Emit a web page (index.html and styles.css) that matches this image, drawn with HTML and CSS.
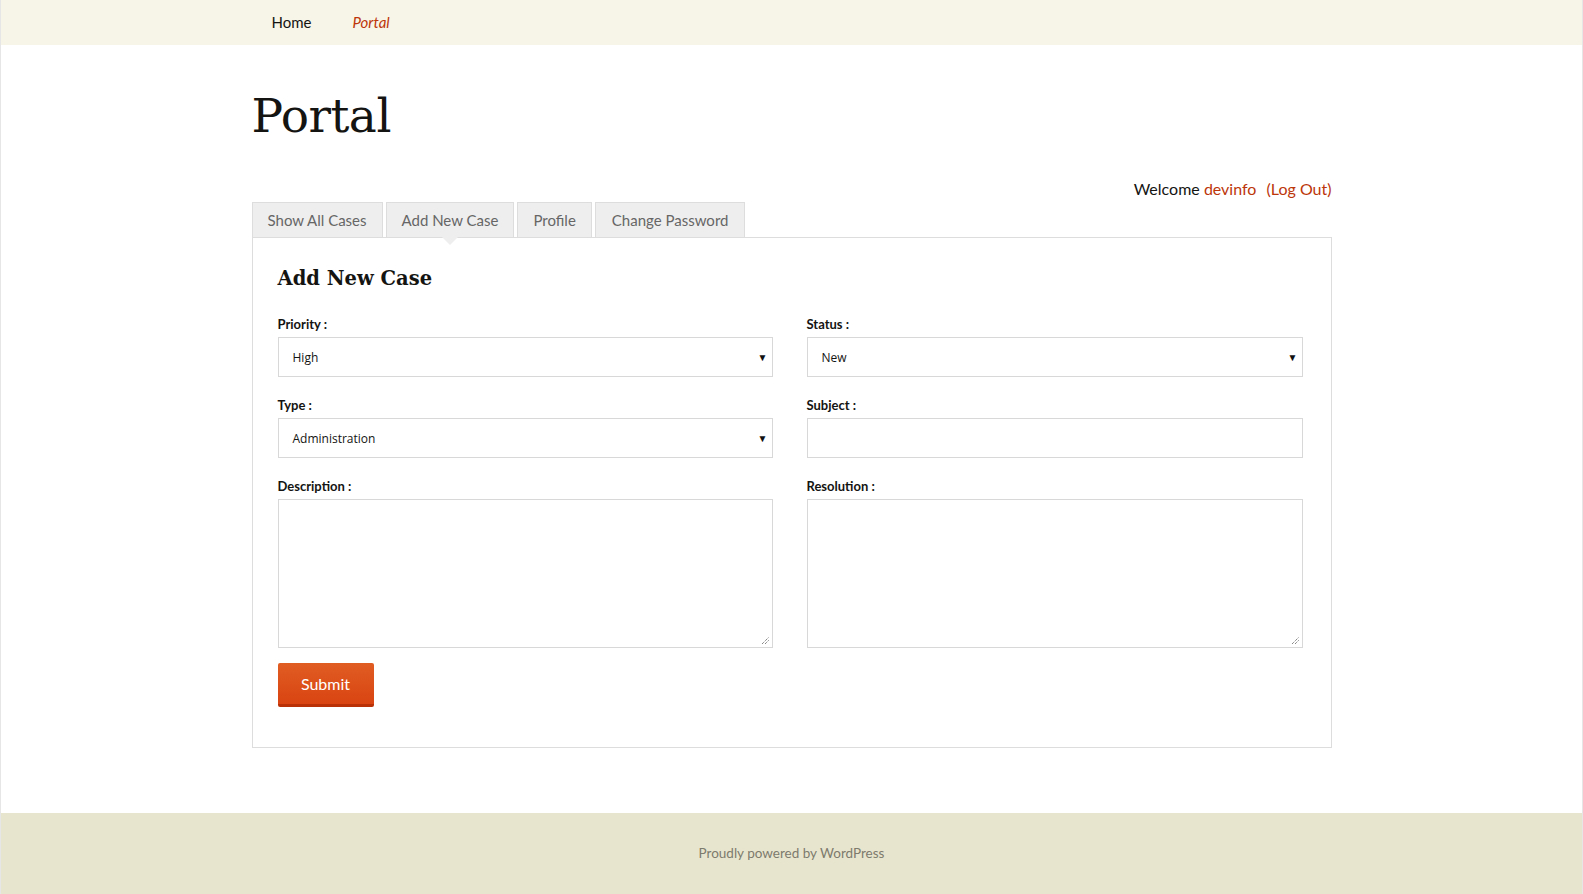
FILE: index.html
```html
<!DOCTYPE html>
<html>
<head>
<meta charset="utf-8">
<link rel="stylesheet" href="styles.css">
<title>Portal</title>
</head>
<body>
<div class="page">
  <header class="navbar">
    <nav class="nav">
      <a class="nav-link" href="#">Home</a>
      <a class="nav-link current" href="#">Portal</a>
    </nav>
  </header>
  <main class="main">
    <h1 class="page-title">Portal</h1>
    <div class="welcome">Welcome <a href="#" class="user">devinfo</a> <a href="#" class="logout">(Log Out)</a></div>
    <ul class="tabs">
      <li class="tab">Show All Cases</li>
      <li class="tab active">Add New Case</li>
      <li class="tab">Profile</li>
      <li class="tab wide">Change Password</li>
    </ul>
    <section class="panel">
      <h2 class="panel-title">Add New Case</h2>
      <form class="form-grid">
        <div class="field">
          <label class="label">Priority :</label>
          <div class="select"><span>High</span><span class="arrow">▼</span></div>
        </div>
        <div class="field">
          <label class="label">Status :</label>
          <div class="select"><span>New</span><span class="arrow">▼</span></div>
        </div>
        <div class="field">
          <label class="label">Type :</label>
          <div class="select"><span>Administration</span><span class="arrow">▼</span></div>
        </div>
        <div class="field">
          <label class="label">Subject :</label>
          <div class="input"></div>
        </div>
        <div class="field">
          <label class="label">Description :</label>
          <div class="textarea"><svg class="grip" width="9" height="9" viewBox="0 0 9 9"><path d="M1 8 L8 1 M4 8 L8 4" stroke="#555" stroke-width="1" stroke-dasharray="1 1"/></svg></div>
        </div>
        <div class="field">
          <label class="label">Resolution :</label>
          <div class="textarea"><svg class="grip" width="9" height="9" viewBox="0 0 9 9"><path d="M1 8 L8 1 M4 8 L8 4" stroke="#555" stroke-width="1" stroke-dasharray="1 1"/></svg></div>
        </div>
        <div class="actions">
          <button type="button" class="submit">Submit</button>
        </div>
      </form>
    </section>
  </main>
  <footer class="footer">Proudly powered by WordPress</footer>
</div>
</body>
</html>
```

FILE: styles.css
```css
* { box-sizing: border-box; }
html, body { margin: 0; padding: 0; background: #fff; }
body {
  font-family: "Source Sans Pro", Lato, "Liberation Sans", sans-serif;
  color: #141412;
}
.page {
  min-height: 894px;
  display: flex;
  flex-direction: column;
  border-left: 1px solid #e6e6e6;
  border-right: 1px solid #e6e6e6;
}
.navbar {
  background: #f7f5e7;
  height: 45px;
}
.nav {
  width: 1080px;
  margin: 0 auto;
  display: flex;
  padding-left: 20px;
}
.nav-link {
  font-size: 15px;
  line-height: 45px;
  padding: 0 20px 0 0;
  margin-right: 21px;
  color: #141412;
  text-decoration: none;
}
.nav-link.current {
  font-style: italic;
  color: #bc360a;
}
.main {
  width: 1080px;
  margin: 0 auto;
  flex: 1;
  padding-bottom: 65px;
}
.page-title {
  font-family: "DejaVu Serif", "Liberation Serif", serif;
  font-weight: normal;
  font-size: 47px;
  line-height: 1;
  margin: 47px 0 0;
  letter-spacing: -0.5px;
  height: 50px;
}
.welcome {
  text-align: right;
  font-size: 16px;
  margin-top: 37px;
  height: 20px;
  line-height: 20px;
}
.welcome a { color: #bc360a; text-decoration: none; }
.welcome .logout { margin-left: 6px; }
.tabs {
  list-style: none;
  margin: 3px 0 0;
  padding: 0;
  display: flex;
  gap: 3px;
  height: 35px;
}
.tab {
  background: #eee;
  border: 1px solid #ddd;
  border-bottom: none;
  color: #666;
  font-size: 15px;
  height: 35px;
  line-height: 34px;
  padding: 0 15px;
  position: relative;
}
.tab.wide { padding: 0 16px 0 16px; }
.tab.active::after {
  content: "";
  position: absolute;
  left: 50%;
  bottom: -8px;
  margin-left: -8px;
  border-left: 8px solid transparent;
  border-right: 8px solid transparent;
  border-top: 8px solid #eee;
  z-index: 2;
}
.panel {
  border: 1px solid #ddd;
  padding: 26px 28px 40px 25px;
}
.panel-title {
  font-family: "DejaVu Serif", "Liberation Serif", serif;
  font-weight: bold;
  font-size: 19.5px;
  margin: 0 0 22px;
  line-height: 30px;
}
.form-grid {
  display: grid;
  grid-template-columns: 495px 496px;
  column-gap: 34px;
  row-gap: 20px;
}
.field { display: flex; flex-direction: column; }
.label {
  font-size: 13px;
  font-weight: bold;
  line-height: 16px;
  margin-bottom: 5px;
}
.select, .input {
  height: 40px;
  border: 1px solid #d8d8d8;
  display: flex;
  align-items: center;
  justify-content: space-between;
  padding: 0 4px 0 14px;
  font-family: "Open Sans", "Noto Sans", sans-serif;
  font-size: 12px;
  color: #141412;
}
.arrow { font-size: 10px; color: #111; }
.textarea {
  height: 149px;
  border: 1px solid #d8d8d8;
  position: relative;
}
.grip { position: absolute; right: 2px; bottom: 2px; }
.actions { grid-column: 1 / 3; padding-top: 5px; margin-top: -10px; }
.submit {
  width: 96px;
  height: 44px;
  border: none;
  border-bottom: 3px solid #b93207;
  border-radius: 2px;
  background: linear-gradient(#e05d22, #d94412);
  color: #fff;
  font-family: "Source Sans Pro", Lato, "Liberation Sans", sans-serif;
  font-size: 16px;
  padding: 0;
}
.footer {
  background: #e8e5ce;
  height: 81px;
  text-align: center;
  line-height: 81px;
  font-size: 13.5px;
  color: #7d7b6d;
}
```
